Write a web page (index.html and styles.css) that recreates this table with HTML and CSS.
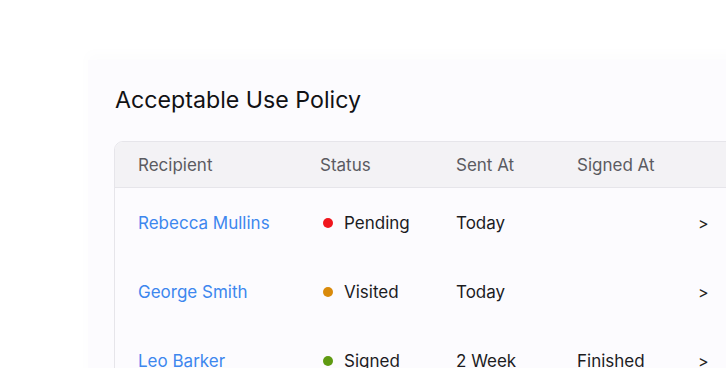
FILE: index.html
```html
<!DOCTYPE html>
<html>
<head>
<meta charset="utf-8">
<link rel="stylesheet" href="styles.css">
</head>
<body>
<div class="page">
  <section class="panel">
    <h1 class="title">Acceptable Use Policy</h1>
    <div class="card">
      <div class="row head">
        <div>Recipient</div>
        <div>Status</div>
        <div>Sent At</div>
        <div>Signed At</div>
        <div></div>
      </div>
      <div class="row">
        <div class="name">Rebecca Mullins</div>
        <div class="status"><span class="dot red"></span>Pending</div>
        <div>Today</div>
        <div></div>
        <div class="chev">&gt;</div>
      </div>
      <div class="row">
        <div class="name">George Smith</div>
        <div class="status"><span class="dot orange"></span>Visited</div>
        <div>Today</div>
        <div></div>
        <div class="chev">&gt;</div>
      </div>
      <div class="row">
        <div class="name">Leo Barker</div>
        <div class="status"><span class="dot green"></span>Signed</div>
        <div>2 Week</div>
        <div>Finished</div>
        <div class="chev">&gt;</div>
      </div>
    </div>
  </section>
</div>
</body>
</html>
```

FILE: styles.css
```css
html, body {
  margin: 0;
  padding: 0;
  background: #ffffff;
  overflow: hidden;
  width: 726px;
  height: 368px;
}
.page {
  padding: 60px 0 0 88px;
  font-family: Inter, "Noto Sans", sans-serif;
}
.panel {
  width: 700px;
  height: 400px;
  background: #fcfbfe;
  box-shadow: 0 -6px 10px rgba(120, 110, 160, 0.025);
  padding: 26px 0 0 26px;
  box-sizing: border-box;
}
.title {
  margin: 0 0 27px 1px;
  font-size: 23.2px;
  font-weight: 400;
  line-height: 28px;
  color: #111114;
  letter-spacing: 0;
}
.card {
  width: 700px;
  border: 1px solid #e6e5ea;
  border-radius: 9px 0 0 0;
  background: #fcfbfe;
  overflow: hidden;
}
.row {
  display: grid;
  grid-template-columns: 182px 136px 121px 121px 40px;
  padding-left: 23px;
  align-items: center;
  height: 69px;
  font-size: 17px;
  color: #1c1c1f;
}
.row.head {
  height: 45px;
  background: #f3f2f5;
  border-bottom: 1px solid #e6e5ea;
  color: #5b5b61;
}
.name {
  color: #3d87ee;
}
.status {
  display: flex;
  align-items: center;
}
.dot {
  width: 10px;
  height: 10px;
  border-radius: 50%;
  margin: 0 11px 0 3px;
}
.red { background: #f0161d; }
.orange { background: #d98a0b; }
.green { background: #5f9a12; }
.chev {
  font-size: 16px;
  color: #222;
}
```
